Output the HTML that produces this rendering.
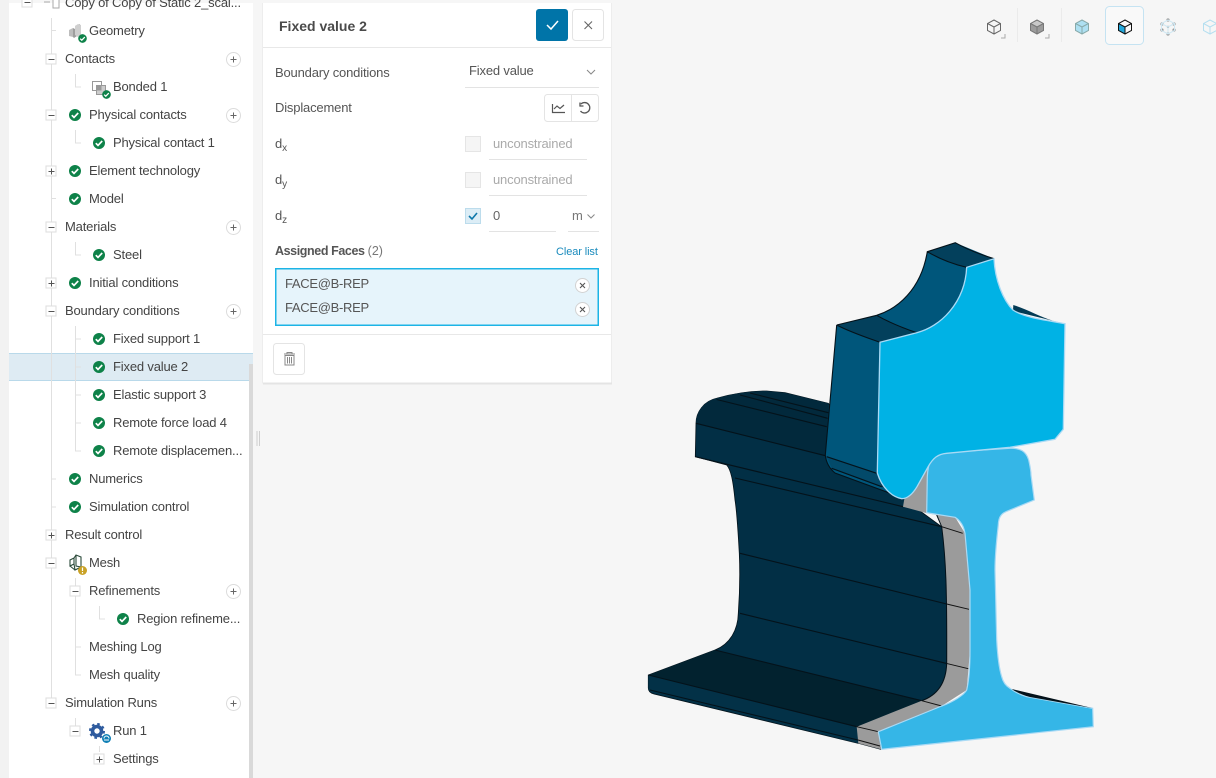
<!DOCTYPE html>
<html><head><meta charset="utf-8"><style>
html,body{margin:0;padding:0}
body{width:1216px;height:778px;overflow:hidden;position:relative;background:#f6f6f6;font-family:"Liberation Sans",sans-serif;font-size:13px;color:#444}
.t{position:absolute;line-height:20px;white-space:nowrap;letter-spacing:-.17px;margin-top:1px}
svg{position:absolute;left:0;top:0}
.abs{position:absolute;box-sizing:border-box}
sub{font-size:10px;line-height:0;vertical-align:-3px}
</style></head><body>
<div class="abs" style="left:0;top:0;width:9px;height:778px;background:#f2f2f2"></div>
<div class="abs" style="left:9px;top:3px;width:244px;height:775px;background:#fff"></div>
<div class="abs" style="left:9px;top:353px;width:244px;height:28px;background:#deebf3;border-top:1px solid #b9d9ea;border-bottom:1px solid #b9d9ea"></div>
<div class="abs" style="left:249px;top:364px;width:4px;height:414px;background:#d9d9d9"></div>
<svg width="1216" height="778" viewBox="0 0 1216 778">
<defs>
<g id="ck"><circle r="6" fill="#0e8249"/><path d="M-3.2 .2L-1 2.400L3.200-2" fill="none" stroke="#fff" stroke-width="1.700"/></g>
<g id="ps"><circle r="7" fill="#fff" stroke="#dcdcdc"/><path d="M-3 0H3M0-3V3" stroke="#666" stroke-width="1"/></g>
<g id="pb"><rect x="-5" y="-5" width="10" height="10" fill="#fff" stroke="#ddd"/><path d="M-2.500 .5H3.500M.5-2.500V3.500" stroke="#555"/></g>
<g id="mb"><rect x="-5" y="-5" width="10" height="10" fill="#fff" stroke="#ddd"/><path d="M-2.500 .5H3.500" stroke="#555"/></g>
<g id="xc"><circle r="7" fill="#fff" stroke="#d2d2d2"/><path d="M-2.500-2.500L2.500 2.500M2.500-2.500L-2.500 2.500" stroke="#555" stroke-width="1.100"/></g>
<g id="cube" fill="none" stroke-width="1"><path d="M0-7L6.500-3.500V3.500L0 7L-6.500 3.500V-3.500ZM-6.500-3.500L0 0L6.500-3.500M0 0V7"/></g>
</defs>
<g fill="none" stroke="#e0e0e0">
<path d="M51.500 18V702M51.500 30.500H56M75.500 74V87H81M75.500 130V143H81M51.500 198.500H56M75.500 242V255H81M75.500 326V451H81M75.500 339H81M75.500 367H81M75.500 395H81M75.500 423H81M51.500 479H56M51.500 507H56M75.500 578V675H81M75.500 647H81M99.500 606V619H105M75.500 718V731M99.500 746V752"/>
</g>
<use href="#mb" x="27" y="2"/>
<use href="#mb" x="51" y="59"/><use href="#mb" x="51" y="115"/><use href="#pb" x="51" y="171"/><use href="#mb" x="51" y="227"/><use href="#pb" x="51" y="283"/><use href="#mb" x="51" y="311"/><use href="#pb" x="51" y="535"/><use href="#mb" x="51" y="563"/><use href="#mb" x="75" y="591"/><use href="#mb" x="51" y="703"/><use href="#mb" x="75" y="731"/><use href="#pb" x="99" y="759"/>
<use href="#ps" x="233.500" y="59.500"/><use href="#ps" x="233.500" y="115.500"/><use href="#ps" x="233.500" y="227.500"/><use href="#ps" x="233.500" y="311.500"/><use href="#ps" x="233.500" y="591.500"/><use href="#ps" x="233.500" y="703.500"/>
<use href="#ck" x="75" y="115"/><use href="#ck" x="99" y="143"/><use href="#ck" x="75" y="171"/><use href="#ck" x="75" y="199"/><use href="#ck" x="99" y="255"/><use href="#ck" x="75" y="283"/><use href="#ck" x="99" y="339"/><use href="#ck" x="99" y="367"/><use href="#ck" x="99" y="395"/><use href="#ck" x="99" y="423"/><use href="#ck" x="99" y="451"/><use href="#ck" x="75" y="479"/><use href="#ck" x="75" y="507"/><use href="#ck" x="123" y="619"/>
<!-- top row icon -->
<path d="M44 2H50M53-2H59V8H53Z" fill="#fff" stroke="#aaa"/>
<!-- geometry -->
<path d="M69 30L73 28V37L69 36Z" fill="#bdbdbd"/><path d="M73 28L75 29V26L80 24V34L74 38L73 37Z" fill="#9e9e9e"/><path d="M75 26L78 24L81 25V35L78 37L75 35Z" fill="#cfcfcf"/>
<g transform="translate(82.500 38.500) scale(.72)"><use href="#ck"/></g>
<!-- bonded -->
<rect x="92.500" y="81.500" width="9" height="9" fill="#fff" stroke="#999"/><rect x="96.500" y="85.500" width="9" height="9" fill="#ccc" stroke="#999"/><rect x="97" y="86" width="4.500" height="4.500" fill="#999"/>
<g transform="translate(106.500 94.500) scale(.72)"><use href="#ck"/></g>
<!-- mesh -->
<g fill="none" stroke="#2b4a3a" stroke-width="1.100"><path d="M70 566V560L74 558V564ZM74 558L76 555L81 557V567L75 570L74 564M75 570L70 566M76 555V566L81 567"/></g>
<circle cx="82.500" cy="570.500" r="4.500" fill="#c9a227"/><path d="M82.500 567.500V571M82.500 572V573.500" stroke="#fff" stroke-width="1.200"/>
<!-- gear -->
<circle cx="97" cy="731" r="4.500" fill="none" stroke="#2e5b9e" stroke-width="3.600"/><circle cx="97" cy="731" r="7" fill="none" stroke="#2e5b9e" stroke-width="2" stroke-dasharray="2.600 2.900"/>
<circle cx="106.500" cy="738.500" r="4.500" fill="#0f7fb5"/><path d="M104 738.500A2.500 2.500 0 0 1 109 738.500" fill="none" stroke="#fff"/><path d="M104 740H109" stroke="#fff"/>
<!-- splitter -->
<path d="M257 431V446M259.500 431V446" stroke="#cfcfcf" stroke-width="1"/>

<!-- toolbar -->
<rect x="1105.500" y="6.500" width="38" height="38" rx="4" fill="#f9f9f9" stroke="#c5e3f2"/>
<path d="M1017.500 8V42M1061.500 8V42" stroke="#ebebeb"/>
<use href="#cube" x="994" y="27" stroke="#666"/><path d="M1001 38H1005V34M1045 38H1049V34" fill="none" stroke="#aaa"/>
<path d="M1037 20L1043.500 23.500V30.500L1037 34L1030.500 30.500V23.500Z" fill="#9c9c9c"/><path d="M1037 20L1043.500 23.500L1037 27L1030.500 23.500Z" fill="#c9c9c9"/><use href="#cube" x="1037" y="27" stroke="#777"/>
<path d="M1082 20L1088.500 23.500V30.500L1082 34L1075.500 30.500V23.500Z" fill="#aee0f2"/><use href="#cube" x="1082" y="27" stroke="#8aa"/>
<path d="M1125 27V34L1118.500 30.500V23.500Z" fill="#22a8dc"/><use href="#cube" x="1125" y="27" stroke="#111" stroke-width="1.300"/>
<g fill="#9a9a9a"><circle cx="1168" cy="20" r="1.600"/><circle cx="1174" cy="24" r="1.600"/><circle cx="1174" cy="30" r="1.600"/><circle cx="1168" cy="34" r="1.600"/><circle cx="1162" cy="30" r="1.600"/><circle cx="1162" cy="24" r="1.600"/><circle cx="1168" cy="27" r="1.200"/></g>
<use href="#cube" x="1168" y="27" stroke="#cfe8f3"/>
<use href="#cube" x="1210" y="27" stroke="#b5dff0"/>

<!-- lower rail dark body -->
<path d="M695.300 456.700L696 423.300C696 412 704 401 716.700 398.300C735 393 752 391 766.700 391L785 392.700L828.300 403.300L905 500L942 527C946 560 947 590 946.700 663.300C946 686 935 696 921.700 700.700L880.700 749.300L858.300 743.300L654 694C650 693 648.300 691 648.300 688V675L715 650C730 644 738 630 738.300 613.300C740 590 740 570 739.300 553.300C738 530 737 512 735 500C733 480 731 470 726.700 465Z" fill="#022f45" stroke="#04121a" stroke-width=".8"/>
<path d="M696 423.300C696 412 704 401 716.700 398.300C735 393 752 391 766.700 391L785 392.700L828.300 403.300L825.300 455.700Z" fill="#02293c"/>
<path d="M648.300 675L715 650L921.700 700.700L856.700 726.700Z" fill="#02222f"/>
<path d="M648.300 675L856.700 726.700L858.300 743.300L654 693C650 692 648.300 690 648.300 688Z" fill="#033147"/>
<g fill="none" stroke="#04121a" stroke-width="1.100">
<path d="M696 423.300L825.300 455.700M716.700 399.500L826.700 426.700M740 395L827.700 418.300M750 393L828.300 412.700M695.300 456.700L903 506.700M735 478L941.700 526.700M740 553.300L946.700 604M740 613.300L946 663.300M715 650L921.700 700.700M648.300 675L856.700 726.700M650 690L858 740"/>
</g>
<!-- gray web -->
<path d="M903 506.700L905 495L917 486L928 467L927 513L955 517L965 533.300L970 590V650L966.700 690L941.700 706L878.300 731.700L881 749.300L858.300 743.300L856.700 726.700L921.700 700.700C935 696 946 686 946.700 663.300C947 590 946 560 941.700 526.700L936.700 515L926 513Z" fill="#9b9b9b"/>
<path d="M941.700 526.700L962.700 533.300M946.700 604L969 609.300M946 663.300L968.300 668.700M921.700 700.700L941.700 706M856.700 726.700L878.300 731.700M858 740L880 746M914 479.700L918 480.500" stroke="#111" fill="none"/>
<path d="M936.700 515L941.700 526.700C946 560 947 590 946.700 663.300C946 686 935 696 921.700 700.700" fill="none" stroke="#04121a" stroke-width="1"/>
<!-- lower light face -->
<path d="M926.700 512.700L927.300 476.700C928 465 930 456 938 453.500L956.700 451.700L1010 448.300C1020 448 1026 451 1028.700 460C1030 466 1031 470 1031 475L1034.300 500L1008.300 510.700C1002 513 998.500 516 998.300 525C996 545 995 558 995 570L996.700 640C997.500 655 999 668 1001.700 676.700C1003 682 1006 686 1010 688.300C1015 692 1020 695 1026.700 696.700L1092.700 708.300L1093.300 726.700L881.700 749.300L878.300 731.700L941.700 706C953 702 964 695 966.700 690C969 680 970 665 970 650V590L965 533.300C964 528 962 524 960 521.700C958 519 956 518 955 517.300Z" fill="#35b6e7" stroke="#a9daf5" stroke-width="1.200"/>
<path d="M1011.700 689L1092 708L1030 697C1022 695 1016 692 1011.700 689Z" fill="#04121a"/>
<!-- upper rail -->
<path d="M1013.300 305C1027 309 1040 317 1053 320.700L1065 323.700L1013 311Z" fill="#033b55"/>
<path d="M836.700 325L876.700 315.300C897 309 921 290 927.300 251.700L955.300 242.700L994 258.700L966.700 267.300C965 303 940 327 916.700 332.700L880 342.300L877.300 473L881.700 486.700L903 498L835 473C829 468 826 462 825.300 455Z" fill="#00567b"/>
<path d="M826.700 456.700L876.700 473.300L881.700 486.700L831.700 468.300Z" fill="#034a6a"/>
<path d="M927.300 251.700L955.300 242.700C968 250 982 255 994 258.700L966.700 267.300C952 264 938 258 927.300 251.700Z" fill="#03405c"/>
<path d="M836.700 325L876.700 315.300C890 323 903 328 916.700 332.700L880 342.300C865 337 850 332 836.700 325Z" fill="#03405c"/>
<g fill="none" stroke="#04121a" stroke-width="1.100">
<path d="M836.700 325L876.700 315.300C897 309 921 290 927.300 251.700L955.300 242.700C968 250 982 255 994 258.700M927.300 251.700C938 258 952 264 966.700 267.300M836.700 325C850 332 865 337 880 342.300M876.700 315.300C890 323 903 328 916.700 332.700M836.700 325L825.300 455C826 462 829 468 835 473L903 498M826.700 456.700L876.700 473.300M831.700 468.300L881.700 486.700"/>
</g>
<path d="M880 342.300L916.700 332.700C940 327 965 303 966.700 267.300L994 258.700C995 280 1003 300 1013 310C1025 318 1045 320 1065 323.700L1063.300 429.300L1055 439.300L1010 447.300L946.700 453.300C938 454 933 458 928 467L917 486.700C912 495 907 498.700 901.700 498.700C892 497 882 488 877.300 473Z" fill="#00b2e5" stroke="#a9daf5" stroke-width="1.300"/>
<!-- panel -->
<rect x="263" y="3" width="348" height="380" fill="#fff"/>
<path d="M262.500 3V383H611.500V3" fill="none" stroke="#ededed"/>
<path d="M263 383.500H612" stroke="#e4e4e4" stroke-width="2"/>
<path d="M263 47.500H611M263 334.500H611" stroke="#e8e8e8"/>
<rect x="536" y="9" width="32" height="32" rx="3" fill="#0074a8"/><path d="M547 25L551 29L558 21" fill="none" stroke="#fff" stroke-width="1.500"/>
<rect x="572.500" y="9.500" width="31" height="31" rx="3" fill="#fff" stroke="#e4e4e4"/><path d="M584.500 21.500L592 29M592 21.500L584.500 29" stroke="#666" stroke-width="1.100"/>
<path d="M465 87.500H599M489 159.500H587M489 195.500H587M489 231.500H556M568 231.500H599" stroke="#e3e3e3"/>
<path d="M587 70L591 74L595 70M587.500 214.500L591 218L594.500 214.500" fill="none" stroke="#888"/>
<rect x="544.500" y="94.500" width="54" height="27" rx="3" fill="#fff" stroke="#e4e4e4"/><path d="M571.500 94.500V121.500" stroke="#e4e4e4"/>
<path d="M552.500 104V112.500H565M554 109L557 106L560 108.500L564 105" fill="none" stroke="#555" stroke-width="1.200"/>
<path d="M581 104A5.200 5.200 0 1 1 580.500 111M580 102.500V106H583.500" fill="none" stroke="#555" stroke-width="1.300"/>
<rect x="465.500" y="136.500" width="15" height="15" fill="#f5f5f5" stroke="#e5e5e5"/><rect x="465.500" y="172.500" width="15" height="15" fill="#f5f5f5" stroke="#e5e5e5"/>
<rect x="465.500" y="208.500" width="15" height="15" fill="#dcedf6" stroke="#bcdcec"/><path d="M469 216L472 219L477 213" fill="none" stroke="#0d77aa" stroke-width="1.600"/>
<rect x="275.750" y="268.750" width="322.500" height="56.500" fill="#e6f4fb" stroke="#1cb4e6" stroke-width="1.500"/>
<use href="#xc" x="582.500" y="285.500"/><use href="#xc" x="582.500" y="309.500"/>
<rect x="273.500" y="343.500" width="31" height="31" rx="3" fill="#fff" stroke="#e4e4e4"/>
<path d="M284 354H295M287 354V352.500H292V354M285 355.500H294V365H285ZM287.500 357V363.500M289.500 357V363.500M291.500 357V363.500" fill="none" stroke="#888"/>
</svg>
<!-- tree text -->
<div class="t" style="left:65px;top:-8px">Copy of Copy of Static 2_scal...</div>
<div class="t" style="left:89px;top:20px">Geometry</div>
<div class="t" style="left:65px;top:48px">Contacts</div>
<div class="t" style="left:113px;top:76px">Bonded 1</div>
<div class="t" style="left:89px;top:104px">Physical contacts</div>
<div class="t" style="left:113px;top:132px">Physical contact 1</div>
<div class="t" style="left:89px;top:160px">Element technology</div>
<div class="t" style="left:89px;top:188px">Model</div>
<div class="t" style="left:65px;top:216px">Materials</div>
<div class="t" style="left:113px;top:244px">Steel</div>
<div class="t" style="left:89px;top:272px">Initial conditions</div>
<div class="t" style="left:65px;top:300px">Boundary conditions</div>
<div class="t" style="left:113px;top:328px">Fixed support 1</div>
<div class="t" style="left:113px;top:356px">Fixed value 2</div>
<div class="t" style="left:113px;top:384px">Elastic support 3</div>
<div class="t" style="left:113px;top:412px">Remote force load 4</div>
<div class="t" style="left:113px;top:440px">Remote displacemen...</div>
<div class="t" style="left:89px;top:468px">Numerics</div>
<div class="t" style="left:89px;top:496px">Simulation control</div>
<div class="t" style="left:65px;top:524px">Result control</div>
<div class="t" style="left:89px;top:552px">Mesh</div>
<div class="t" style="left:89px;top:580px">Refinements</div>
<div class="t" style="left:137px;top:608px">Region refineme...</div>
<div class="t" style="left:89px;top:636px">Meshing Log</div>
<div class="t" style="left:89px;top:664px">Mesh quality</div>
<div class="t" style="left:65px;top:692px">Simulation Runs</div>
<div class="t" style="left:113px;top:720px">Run 1</div>
<div class="t" style="left:113px;top:748px">Settings</div>
<!-- panel text -->
<div class="t" style="left:279px;top:15px;font-size:14px;font-weight:bold;color:#4a4a4a;letter-spacing:0">Fixed value 2</div>
<div class="t" style="left:275px;top:62px;color:#555">Boundary conditions</div>
<div class="t" style="left:469px;top:60px;color:#555">Fixed value</div>
<div class="t" style="left:275px;top:97px;color:#555">Displacement</div>
<div class="t" style="left:275px;top:133px;color:#555">d<sub>x</sub></div>
<div class="t" style="left:275px;top:169px;color:#555">d<sub>y</sub></div>
<div class="t" style="left:275px;top:205px;color:#555">d<sub>z</sub></div>
<div class="t" style="left:493px;top:133px;color:#aaa">unconstrained</div>
<div class="t" style="left:493px;top:169px;color:#aaa">unconstrained</div>
<div class="t" style="left:493px;top:205px;color:#666">0</div>
<div class="t" style="left:572px;top:205px;color:#777">m</div>
<div class="t" style="left:275px;top:240px;color:#555;font-weight:bold;font-size:12.500px;letter-spacing:-.4px">Assigned Faces <span style="font-weight:normal;color:#777;letter-spacing:0">(2)</span></div>
<div class="t" style="left:556px;top:241px;font-size:11px;color:#1a8bbd;letter-spacing:-.1px">Clear list</div>
<div class="t" style="left:285px;top:273px;color:#555;letter-spacing:-.3px">FACE@B-REP</div>
<div class="t" style="left:285px;top:297px;color:#555;letter-spacing:-.3px">FACE@B-REP</div>
</body></html>
